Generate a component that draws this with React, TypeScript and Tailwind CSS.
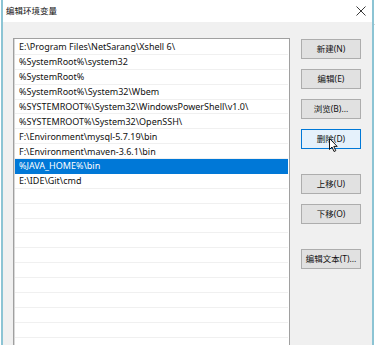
const paths = [
  'E:\\Program Files\\NetSarang\\Xshell 6\\',
  '%SystemRoot%\\system32',
  '%SystemRoot%',
  '%SystemRoot%\\System32\\Wbem',
  '%SYSTEMROOT%\\System32\\WindowsPowerShell\\v1.0\\',
  '%SYSTEMROOT%\\System32\\OpenSSH\\',
  'F:\\Environment\\mysql-5.7.19\\bin',
  'F:\\Environment\\maven-3.6.1\\bin',
  '%JAVA_HOME%\\bin',
  'E:\\IDE\\Git\\cmd',
]

const rows = [...paths, ...Array(12).fill('')]

const font = { fontFamily: '"Noto Sans", "Noto Sans CJK SC", sans-serif' }

function Btn({ label, active, className = '' }: { label: string; active?: boolean; className?: string }) {
  return (
    <div
      className={`relative h-[20px] w-[60px] flex items-center justify-center border text-[8.5px] text-[#111] ${
        active ? 'bg-[#e5f1fb] border-[#0078d7]' : 'bg-[#e1e1e1] border-[#adadad]'
      } ${className}`}
      style={font}
    >
      {label}
      {active && (
        <svg className="absolute left-[27px] top-[8px]" width="10" height="15" viewBox="0 0 10 15">
          <path d="M0.5 0.5 L0.5 11.5 L3 9 L5 13.5 L6.8 12.7 L4.8 8.4 L8.2 8.4 Z" fill="#fff" stroke="#000" strokeWidth="0.9" strokeLinejoin="round" />
        </svg>
      )}
    </div>
  )
}

export default function App() {
  return (
    <div className="w-[375px] h-[345px] bg-white flex overflow-hidden">
      {/* Window */}
      <div className="ml-px w-[373px] h-full border-x-2 border-[#8cc4d4] flex flex-col">
        {/* Title bar */}
        <div className="h-[22px] bg-white flex items-center justify-between pl-[3px] pr-[6px] shrink-0">
          <span className="text-[8.5px] text-[#111]" style={font}>
            编辑环境变量
          </span>
          <svg width="10" height="10" viewBox="0 0 10 10">
            <path d="M0.5 0.5 L9.5 9.5 M9.5 0.5 L0.5 9.5" stroke="#222" strokeWidth="0.9" />
          </svg>
        </div>

        {/* Body */}
        <div className="flex-1 bg-[#f0f0f0] flex pl-[10px] pt-[16px] gap-[11px] overflow-hidden">
          {/* List */}
          <div className="w-[277px] h-[330px] shrink-0 bg-white border border-[#a0a0a0] shadow-[inset_1px_0_0_#d8d8d8] pl-px pt-px overflow-hidden">
            {rows.map((p, i) => {
              const sel = i === 8
              return (
                <div
                  key={i}
                  className={`h-[14.88px] flex items-center pl-[4px] mr-px text-[9px] leading-none border-b ${
                    sel ? 'bg-[#0078d7] text-white border-[#0078d7]' : 'text-[#111] border-[#f0f0f0]'
                  }`}
                  style={font}
                >
                  {p}
                </div>
              )
            })}
          </div>

          {/* Buttons */}
          <div className="flex flex-col pt-px">
            <Btn label="新建(N)" />
            <Btn label="编辑(E)" className="mt-[10px]" />
            <Btn label="浏览(B)..." className="mt-[10px]" />
            <Btn label="删除(D)" active className="mt-[10px]" />
            <Btn label="上移(U)" className="mt-[25px]" />
            <Btn label="下移(O)" className="mt-[10px]" />
            <Btn label="编辑文本(T)..." className="mt-[25px]" />
          </div>
        </div>
      </div>

      {/* Outside desktop strip */}
      <div className="flex-1 flex flex-col">
        <div className="h-[24px]" />
        <div className="h-px bg-[#d4d4d4]" />
      </div>
    </div>
  )
}
